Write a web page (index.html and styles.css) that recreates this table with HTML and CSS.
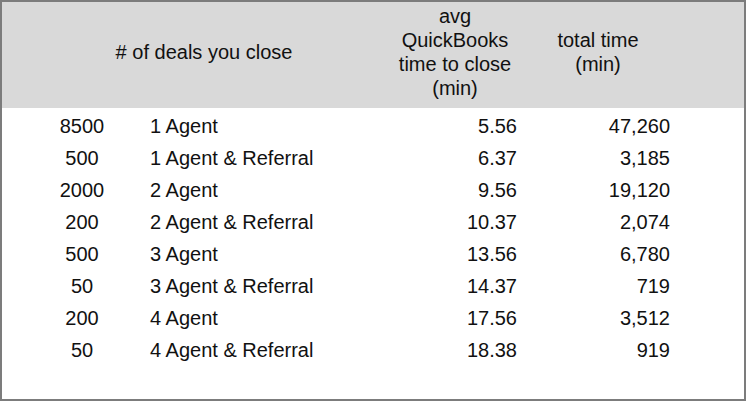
FILE: index.html
```html
<!DOCTYPE html>
<html>
<head>
<meta charset="utf-8">
<link rel="stylesheet" href="styles.css">
</head>
<body>
<div class="frame">
  <table class="sheet">
    <colgroup>
      <col class="c-pad">
      <col class="c-a">
      <col class="c-b">
      <col class="c-c">
      <col class="c-d">
      <col class="c-rest">
    </colgroup>
    <thead>
      <tr class="head">
        <th></th>
        <th colspan="2" class="h-deals">
          <div class="h-inner"># of deals you close</div>
        </th>
        <th class="h-avg"><div class="h-inner">avg<br>QuickBooks<br>time to close<br>(min)</div></th>
        <th class="h-total"><div class="h-inner">total time<br>(min)</div></th>
        <th></th>
      </tr>
    </thead>
    <tbody>
      <tr><td></td><td class="num">8500</td><td class="name">1 Agent</td><td class="avg">5.56</td><td class="total">47,260</td><td></td></tr>
      <tr><td></td><td class="num">500</td><td class="name">1 Agent &amp; Referral</td><td class="avg">6.37</td><td class="total">3,185</td><td></td></tr>
      <tr><td></td><td class="num">2000</td><td class="name">2 Agent</td><td class="avg">9.56</td><td class="total">19,120</td><td></td></tr>
      <tr><td></td><td class="num">200</td><td class="name">2 Agent &amp; Referral</td><td class="avg">10.37</td><td class="total">2,074</td><td></td></tr>
      <tr><td></td><td class="num">500</td><td class="name">3 Agent</td><td class="avg">13.56</td><td class="total">6,780</td><td></td></tr>
      <tr><td></td><td class="num">50</td><td class="name">3 Agent &amp; Referral</td><td class="avg">14.37</td><td class="total">719</td><td></td></tr>
      <tr><td></td><td class="num">200</td><td class="name">4 Agent</td><td class="avg">17.56</td><td class="total">3,512</td><td></td></tr>
      <tr><td></td><td class="num">50</td><td class="name">4 Agent &amp; Referral</td><td class="avg">18.38</td><td class="total">919</td><td></td></tr>
    </tbody>
  </table>
</div>
</body>
</html>
```

FILE: styles.css
```css
html, body {
  margin: 0;
  padding: 0;
  background: #ffffff;
}

.frame {
  box-sizing: border-box;
  width: 746px;
  height: 401px;
  border: 2px solid #7c7c7c;
  background: #ffffff;
  overflow: hidden;
}

.sheet {
  width: 742px;
  border-collapse: collapse;
  table-layout: fixed;
  font-family: "Liberation Sans", Arial, sans-serif;
  font-size: 20px;
  color: #111111;
}

.c-pad { width: 15px; }
.c-a { width: 130px; }
.c-b { width: 244px; }
.c-c { width: 128px; }
.c-d { width: 158px; }
.c-rest { width: 67px; }

.head {
  background: #d9d9d9;
}

.head th {
  box-sizing: border-box;
  height: 106px;
  padding: 0 0 6px 0;
  font-weight: normal;
  text-align: center;
  vertical-align: middle;
  line-height: 24px;
}

tbody td {
  box-sizing: border-box;
  height: 32px;
  padding: 4px 0 0 0;
  line-height: 23px;
  vertical-align: middle;
  white-space: nowrap;
}

tbody td.name {
  text-align: left;
  padding-left: 3px;
}

tbody td.num {
  text-align: center;
}

tbody td.avg {
  text-align: right;
  padding-right: 2px;
}

tbody td.total {
  text-align: right;
  padding-right: 7px;
}
```
